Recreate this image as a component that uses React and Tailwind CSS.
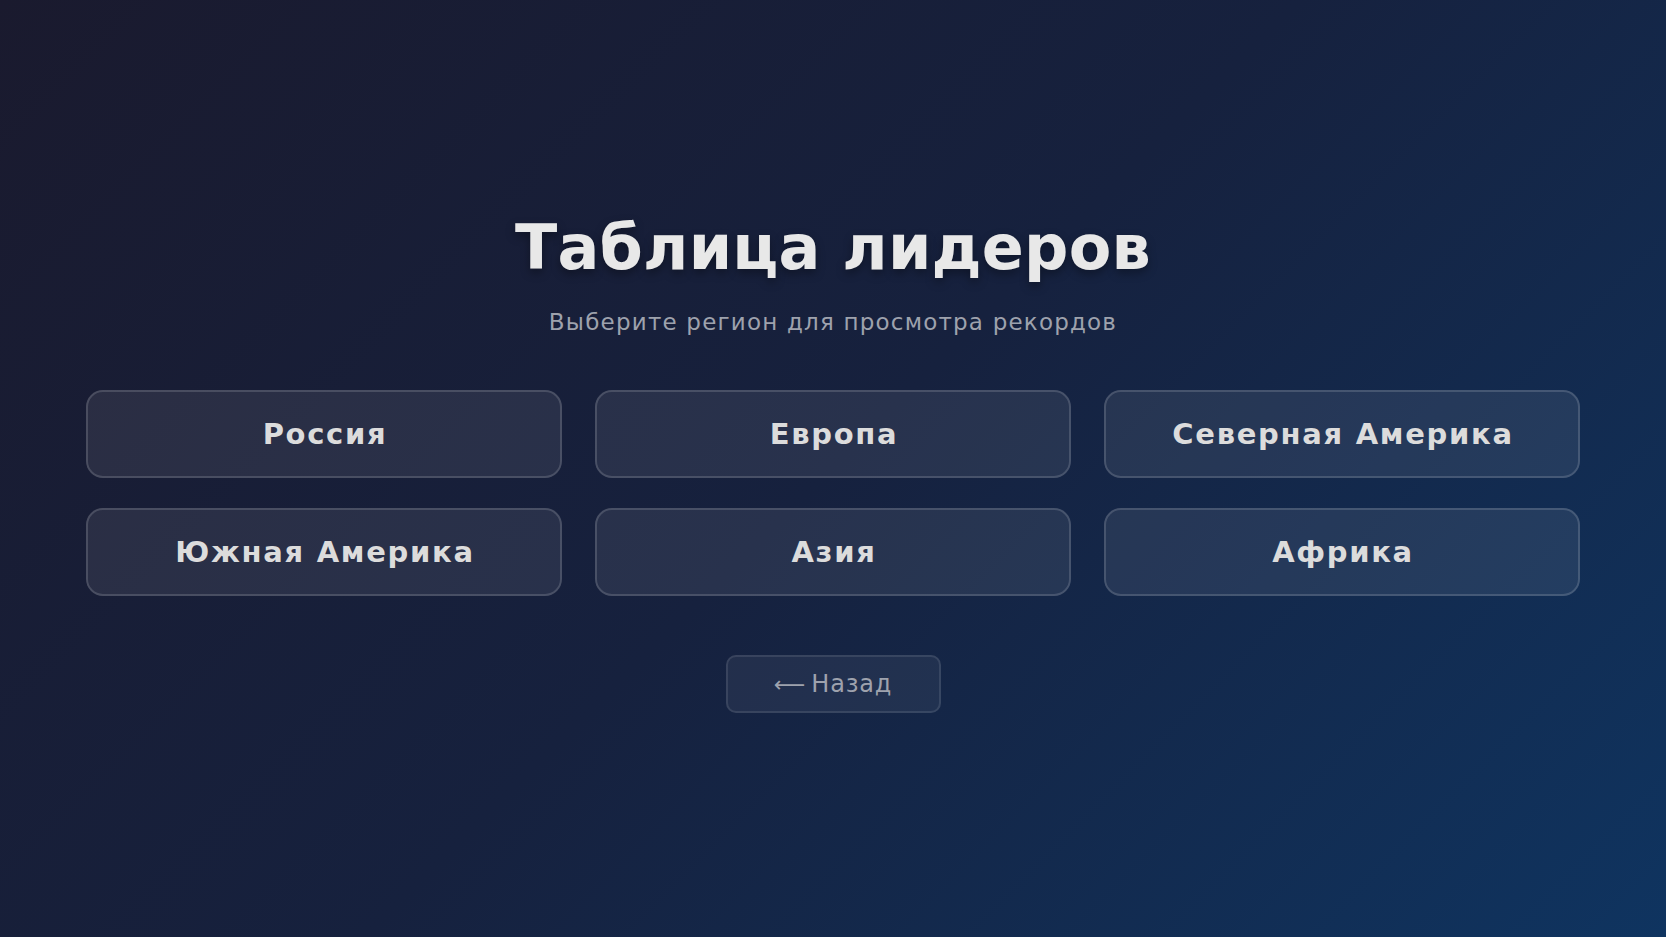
const regions = ['Россия', 'Европа', 'Северная Америка', 'Южная Америка', 'Азия', 'Африка']

export default function App() {
  return (
    <div
      className="flex min-h-screen w-full flex-col items-center justify-center bg-[linear-gradient(135deg,#1a1a2e_0%,#16213e_50%,#0f3460_100%)] px-[86px] pb-[13px] text-[#e8e8e8]"
      style={{ fontFamily: '"DejaVu Sans", "Noto Sans", sans-serif' }}
    >
      <h1 className="text-[62px] font-bold leading-[1.2] tracking-[0.2px] [text-shadow:0_4px_10px_rgba(0,0,0,0.35)]">
        Таблица лидеров
      </h1>
      <p className="mt-[21px] text-[23px] leading-[1.45] tracking-[1.2px] text-[#9ea2ad]">
        Выберите регион для просмотра рекордов
      </p>
      <div className="mt-[51px] grid w-full grid-cols-3 gap-x-[33px] gap-y-[30px]">
        {regions.map((r) => (
          <button
            key={r}
            className="h-[88px] rounded-[17px] border-2 border-white/15 bg-white/[0.08] pl-[2px] text-[29px] font-semibold tracking-[1.7px] text-[#dcdcdc]"
          >
            {r}
          </button>
        ))}
      </div>
      <button className="mt-[59px] flex h-[58px] w-[215px] items-center justify-center gap-[6px] rounded-[10px] border-2 border-white/10 bg-white/[0.06] text-[24px] tracking-[0.8px] text-[#9ea2ad]">
        <span className="text-[22px] tracking-normal">⟵</span>
        <span>Назад</span>
      </button>
    </div>
  )
}
